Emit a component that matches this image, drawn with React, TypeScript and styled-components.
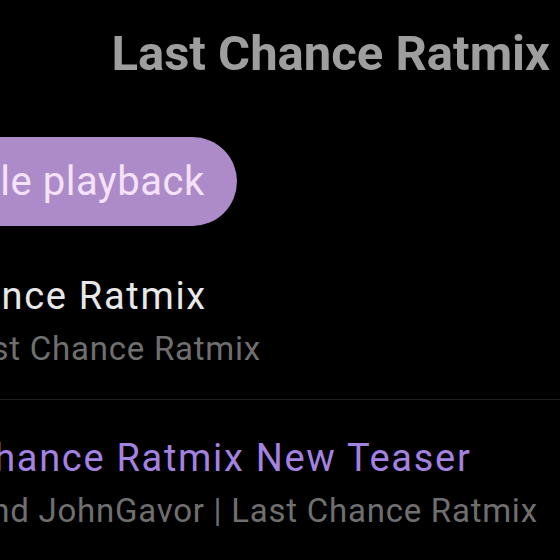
import React from "react";
import styled, { createGlobalStyle } from "styled-components";

const Global = createGlobalStyle`
  html, body { margin: 0; padding: 0; background: #000; }
  body { width: 560px; height: 560px; overflow: hidden; font-family: Roboto, "Noto Sans", sans-serif; }
`;

const Page = styled.div`
  width: 745px;
  margin-left: -185px;
  display: flex;
  flex-direction: column;
`;

const Header = styled.h1`
  margin: 0;
  padding: 24px 10px 0 0;
  text-align: right;
  font-size: 49px;
  line-height: 60px;
  font-weight: 700;
  color: #9e9e9e;
  white-space: nowrap;
`;

const Actions = styled.div`
  display: flex;
  padding: 53px 24px 12px;
`;

const Pill = styled.button`
  height: 89px;
  border: none;
  border-radius: 45px;
  background: #ad8bc9;
  color: #f4e2f8;
  font-family: Roboto, sans-serif;
  font-size: 40px;
  letter-spacing: 0.5px;
  line-height: 89px;
  padding: 0 32px 0 58px;
  white-space: nowrap;
`;

const Item = styled.div<{ $divider?: boolean }>`
  display: flex;
  flex-direction: column;
  gap: 9px;
  padding: 36px 24px 28px;
  border-bottom: ${(p) => (p.$divider ? "1px solid #1f1f1f" : "none")};
`;

const Title = styled.div<{ $active?: boolean }>`
  font-size: 38px;
  letter-spacing: 1.7px;
  line-height: 44px;
  color: ${(p) => (p.$active ? "#a382e2" : "#e8e8e8")};
  white-space: nowrap;
`;

const Subtitle = styled.div`
  font-size: 33px;
  letter-spacing: 0.75px;
  line-height: 44px;
  color: #6f6f6f;
  white-space: nowrap;
`;

export default function App() {
  return (
    <>
      <Global />
      <Page>
        <Header>Last Chance Ratmix</Header>
        <Actions>
          <Pill>Disable playback</Pill>
        </Actions>
        <Item $divider>
          <Title>Last Chance Ratmix</Title>
          <Subtitle>Ratso | Last Chance Ratmix</Subtitle>
        </Item>
        <Item>
          <Title $active>A Last Chance Ratmix New Teaser</Title>
          <Subtitle>Rakman and JohnGavor | Last Chance Ratmix</Subtitle>
        </Item>
      </Page>
    </>
  );
}
